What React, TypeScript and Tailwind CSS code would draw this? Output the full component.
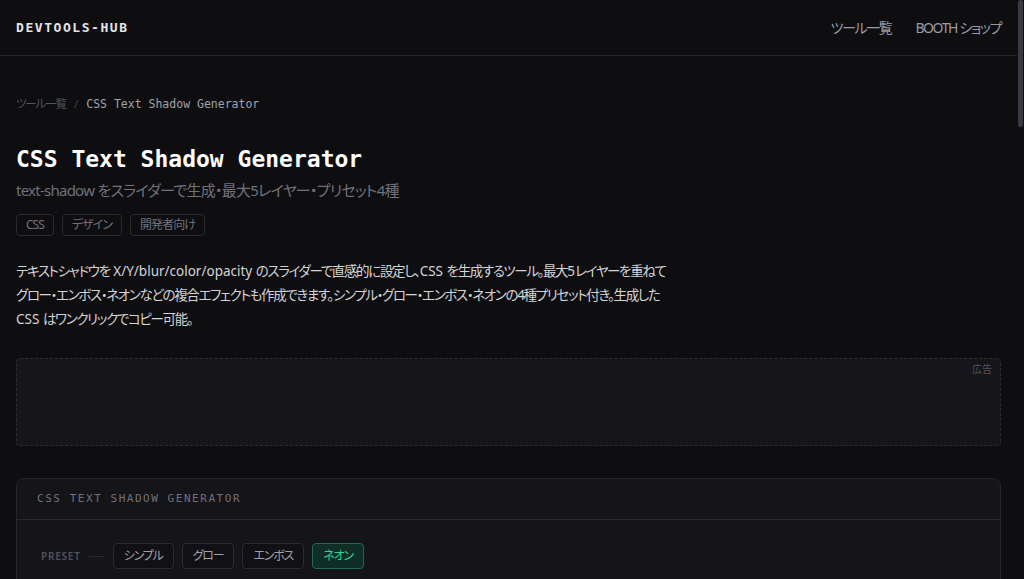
import { useState } from "react";
import { Copy, Plus, Trash2 } from "lucide-react";

const presets = ["シンプル", "グロー", "エンボス", "ネオン"];
const tags = ["CSS", "デザイン", "開発者向け"];

type Layer = { x: number; y: number; blur: number; color: string; opacity: number };

const neonLayers: Layer[] = [
  { x: 0, y: 0, blur: 4, color: "#34d399", opacity: 100 },
  { x: 0, y: 0, blur: 10, color: "#34d399", opacity: 80 },
  { x: 0, y: 0, blur: 20, color: "#10b981", opacity: 60 },
  { x: 0, y: 0, blur: 40, color: "#059669", opacity: 40 },
];

function hexA(hex: string, opacity: number) {
  const n = parseInt(hex.slice(1), 16);
  return `rgba(${(n >> 16) & 255}, ${(n >> 8) & 255}, ${n & 255}, ${opacity / 100})`;
}

// 和文は詰めるが英字は詰めない
function En({ children }: { children: string }) {
  return <span className="tracking-normal">{children}</span>;
}

function Slider({ label, value, min, max, unit }: { label: string; value: number; min: number; max: number; unit: string }) {
  const pct = ((value - min) / (max - min)) * 100;
  return (
    <div className="flex items-center gap-3">
      <span className="w-16 font-mono text-[11px] text-[#71717a]">{label}</span>
      <div className="relative h-1 flex-1 rounded-full bg-[#26262b]">
        <div className="h-1 rounded-full bg-[#34d399]" style={{ width: `${pct}%` }} />
        <div
          className="absolute top-1/2 h-3 w-3 -translate-x-1/2 -translate-y-1/2 rounded-full border border-[#34d399] bg-[#0e0e11]"
          style={{ left: `${pct}%` }}
        />
      </div>
      <span className="w-12 text-right font-mono text-[11px] text-[#a1a1aa]">
        {value}
        {unit}
      </span>
    </div>
  );
}

export default function App() {
  const [active, setActive] = useState("ネオン");
  const shadow = neonLayers.map((l) => `${l.x}px ${l.y}px ${l.blur}px ${hexA(l.color, l.opacity)}`).join(", ");

  return (
    <div className="flex h-screen bg-[#0e0e11] text-[#d4d4d8] [font-family:'Noto_Sans','Noto_Sans_CJK_JP',sans-serif] [font-feature-settings:'palt'_1]">
      <div className="min-w-0 flex-1 overflow-y-auto [scrollbar-width:none]">
        <header className="flex h-14 items-center justify-between border-b border-[#26262b] px-4">
          <span className="text-[13px] font-bold tracking-[0.12em] text-[#e4e4e7] [font-family:'DejaVu_Sans_Mono',monospace]">
            DEVTOOLS-HUB
          </span>
          <nav className="flex items-center gap-6 text-sm tracking-[-0.1em] text-[#9a9aa3]">
            <a href="#">ツール一覧</a>
            <a href="#">BOOTH ショップ</a>
          </nav>
        </header>

        <main className="px-4 pb-20">
          {/* パンくず */}
          <div className="flex items-center gap-2 pt-10 text-[11.5px] leading-4">
            <span className="tracking-[-0.1em] text-[#52525b]">ツール一覧</span>
            <span className="text-[#3f3f46]">/</span>
            <span className="text-[#a1a1aa] [font-family:'DejaVu_Sans_Mono',monospace]">CSS Text Shadow Generator</span>
          </div>

          <h1 className="mt-[31px] text-[23px] font-bold leading-8 text-white [font-family:'DejaVu_Sans_Mono',monospace]">
            CSS Text Shadow Generator
          </h1>
          <p className="mt-[3px] text-[15px] leading-6 tracking-[-0.05em] text-[#71717a]">
            text-shadow をスライダーで生成・最大5レイヤー・プリセット4種
          </p>

          <div className="mt-3 flex gap-2">
            {tags.map((t) => (
              <span key={t} className="rounded border border-[#2a2a30] px-[9px] py-0.5 text-xs leading-4 tracking-[-0.08em] text-[#71717a]">
                {t}
              </span>
            ))}
          </div>

          <p className="mt-[23px] max-w-[690px] text-[13.5px] leading-6 tracking-[-0.1em] text-[#d4d4d8]">
            テキストシャドウを<En>{" X/Y/blur/color/opacity "}</En>のスライダーで直感的に設定し、<En>{"CSS "}</En>を生成するツール。最大
            <En>5</En>レイヤーを重ねて
            <br />
            グロー・エンボス・ネオンなどの複合エフェクトも作成できます。シンプル・グロー・エンボス・ネオンの4種プリセット付き。生成した
            <br />
            <En>{"CSS "}</En>はワンクリックでコピー可能。
          </p>

          {/* 広告枠 */}
          <div className="relative mt-[27px] h-[88px] rounded border border-dashed border-[#2a2a30] bg-[#15151a]">
            <span className="absolute right-2 top-[3px] text-[10px] text-[#52525b]">広告</span>
          </div>

          {/* ツール本体 */}
          <section className="mt-8 rounded-lg border border-[#26262b] bg-[#141419]">
            <div className="border-b border-[#26262b] px-5 py-[11px]">
              <h2 className="text-[11px] leading-[18px] tracking-[0.14em] text-[#71717a] [font-family:'DejaVu_Sans_Mono',monospace]">
                CSS TEXT SHADOW GENERATOR
              </h2>
            </div>

            <div className="px-6 pt-[23px] pb-8">
              <div className="flex items-center gap-2">
                <span className="text-[10px] font-semibold tracking-[0.08em] text-[#52525b]">PRESET</span>
                <span className="h-px w-4 bg-[#2a2a30]" />
                {presets.map((p) => (
                  <button
                    key={p}
                    onClick={() => setActive(p)}
                    className={
                      p === active
                        ? "h-[26px] rounded border border-[#1f6b52] bg-[#0f2e26] px-[10px] text-xs tracking-[-0.1em] text-[#34d399]"
                        : "h-[26px] rounded border border-[#2a2a30] bg-[#111115] px-[10px] text-xs tracking-[-0.1em] text-[#a1a1aa]"
                    }
                  >
                    {p}
                  </button>
                ))}
              </div>

              {/* プレビュー */}
              <div className="mt-6 flex h-56 items-center justify-center rounded-md border border-[#26262b] bg-[#0b0b0e]">
                <span className="text-5xl font-bold text-white" style={{ textShadow: shadow }}>
                  Text Shadow
                </span>
              </div>

              {/* レイヤー */}
              <div className="mt-6 flex items-center justify-between">
                <span className="text-[10px] font-semibold tracking-[0.12em] text-[#52525b]">LAYERS ({neonLayers.length}/5)</span>
                <button className="flex items-center gap-1 rounded border border-[#2a2a30] px-3 py-1 text-xs text-[#a1a1aa]">
                  <Plus className="h-3 w-3" /> レイヤー追加
                </button>
              </div>
              <div className="mt-3 flex flex-col gap-3">
                {neonLayers.map((l, i) => (
                  <div key={i} className="rounded-md border border-[#26262b] bg-[#111115] p-4">
                    <div className="mb-3 flex items-center justify-between">
                      <span className="font-mono text-xs text-[#a1a1aa]">Layer {i + 1}</span>
                      <Trash2 className="h-3.5 w-3.5 text-[#52525b]" />
                    </div>
                    <div className="flex flex-col gap-3">
                      <Slider label="X" value={l.x} min={-50} max={50} unit="px" />
                      <Slider label="Y" value={l.y} min={-50} max={50} unit="px" />
                      <Slider label="blur" value={l.blur} min={0} max={100} unit="px" />
                      <Slider label="opacity" value={l.opacity} min={0} max={100} unit="%" />
                      <div className="flex items-center gap-3">
                        <span className="w-16 font-mono text-[11px] text-[#71717a]">color</span>
                        <span className="h-5 w-8 rounded border border-[#2a2a30]" style={{ backgroundColor: l.color }} />
                        <span className="font-mono text-[11px] text-[#a1a1aa]">{l.color}</span>
                      </div>
                    </div>
                  </div>
                ))}
              </div>

              {/* CSS 出力 */}
              <div className="mt-6 flex items-center justify-between">
                <span className="text-[10px] font-semibold tracking-[0.12em] text-[#52525b]">CSS</span>
                <button className="flex items-center gap-1 rounded border border-[#1f6b52] bg-[#0f2e26] px-3 py-1 text-xs text-[#34d399]">
                  <Copy className="h-3 w-3" /> コピー
                </button>
              </div>
              <pre className="mt-3 whitespace-pre-wrap rounded-md border border-[#26262b] bg-[#0b0b0e] p-4 font-mono text-xs leading-5 text-[#a1a1aa]">
                {`text-shadow: ${shadow};`}
              </pre>
            </div>
          </section>

          {/* 使い方 */}
          <section className="mt-12 max-w-[672px]">
            <h2 className="text-lg font-bold text-[#e4e4e7]">使い方</h2>
            <ol className="mt-4 flex list-decimal flex-col gap-2 pl-5 text-sm leading-6 text-[#a1a1aa]">
              <li>プリセットを選ぶか、スライダーで X / Y / blur / opacity を調整します。</li>
              <li>「レイヤー追加」で最大5つまでシャドウを重ねられます。</li>
              <li>プレビューで仕上がりを確認し、「コピー」で CSS を取得します。</li>
            </ol>
          </section>
        </main>

        <footer className="border-t border-[#26262b] px-4 py-8 text-xs text-[#52525b]">© DEVTOOLS-HUB</footer>
      </div>

      {/* スクロールバー */}
      <div className="w-[7px] shrink-0 bg-[#0e0e11] pl-px">
        <div className="h-[127px] w-[5px] rounded-full bg-[#3a3a42]" />
      </div>
    </div>
  );
}
